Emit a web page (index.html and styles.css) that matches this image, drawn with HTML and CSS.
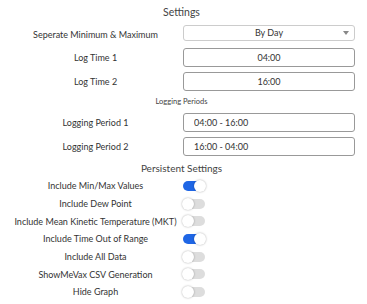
FILE: index.html
```html
<html>
<head>
  <title>Settings</title>
  <link rel="stylesheet" href="styles.css">
</head>
<body>
  <div class="settings">
    <div class="section-title">Settings</div>
    <div class="form-grid">
      <label class="form-label">Seperate Minimum &amp; Maximum</label>
      <div class="select-box">
        <span>By Day</span>
        <svg class="caret" width="6" height="4" viewBox="0 0 6 4"><path d="M0 0 L6 0 L3 4 Z" fill="#888"/></svg>
      </div>
      <label class="form-label">Log Time 1</label>
      <input class="text-input centered" type="text" value="04:00">
      <label class="form-label">Log Time 2</label>
      <input class="text-input centered" type="text" value="16:00">
    </div>

    <div class="sub-title">Logging Periods</div>
    <div class="form-grid periods">
      <label class="form-label">Logging Period 1</label>
      <input class="text-input" type="text" value="04:00 - 16:00">
      <label class="form-label">Logging Period 2</label>
      <input class="text-input" type="text" value="16:00 - 04:00">
    </div>

    <div class="section-title persistent">Persistent Settings</div>
    <div class="toggle-grid">
      <span class="toggle-label">Include Min/Max Values</span>
      <span class="toggle on"><span class="knob"></span></span>
      <span class="toggle-label">Include Dew Point</span>
      <span class="toggle"><span class="knob"></span></span>
      <span class="toggle-label">Include Mean Kinetic Temperature (MKT)</span>
      <span class="toggle"><span class="knob"></span></span>
      <span class="toggle-label">Include Time Out of Range</span>
      <span class="toggle on"><span class="knob"></span></span>
      <span class="toggle-label">Include All Data</span>
      <span class="toggle"><span class="knob"></span></span>
      <span class="toggle-label">ShowMeVax CSV Generation</span>
      <span class="toggle"><span class="knob"></span></span>
      <span class="toggle-label">Hide Graph</span>
      <span class="toggle"><span class="knob"></span></span>
    </div>
  </div>
</body>
</html>
```

FILE: styles.css
```css
body {
  margin: 0;
  background: #fff;
  font-family: Lato, "Open Sans", sans-serif;
  color: #333;
}
.settings {
  padding: 4px 12px 0 8px;
}
.section-title {
  text-align: center;
  font-size: 10.5px;
  color: #444;
  line-height: 16px;
}
.sub-title {
  text-align: center;
  font-size: 7.5px;
  color: #444;
  margin: 6px 0 6px;
  line-height: 10px;
}
.section-title.persistent {
  margin-top: 4px;
  font-size: 10px;
}
.form-grid {
  display: grid;
  grid-template-columns: 175px 172px;
  row-gap: 5px;
  align-items: center;
  margin-top: 5px;
}
.form-grid.periods {
  margin-top: 0;
}
.form-label {
  text-align: center;
  font-size: 9px;
  color: #333;
}
.select-box {
  position: relative;
  height: 16px;
  border: 1px solid #ccc;
  border-radius: 3px;
  box-sizing: border-box;
  font-size: 9px;
  line-height: 14px;
  text-align: center;
  color: #333;
  margin-bottom: 2px;
}
.caret {
  position: absolute;
  right: 5px;
  top: 5px;
}
.text-input {
  height: 19px;
  box-sizing: border-box;
  border: 1px solid #999;
  border-radius: 3px;
  font-family: Lato, "Open Sans", sans-serif;
  font-size: 9px;
  color: #333;
  padding: 0 10px;
  width: 100%;
  margin: 0;
  outline: none;
}
.text-input.centered {
  text-align: center;
}
.toggle-grid {
  display: grid;
  grid-template-columns: 175px auto;
  grid-auto-rows: 17.7px;
  align-items: center;
  margin-top: 1px;
}
.toggle-label {
  text-align: center;
  font-size: 9px;
  color: #333;
}
.toggle {
  position: relative;
  display: block;
  width: 22px;
  height: 10px;
  border-radius: 5px;
  background: #ddd;
}
.toggle.on {
  background: #1f66e5;
}
.knob {
  position: absolute;
  top: -1px;
  left: -1px;
  width: 12px;
  height: 12px;
  border-radius: 50%;
  background: #fff;
  box-shadow: 0 0 2px rgba(0, 0, 0, 0.35);
}
.toggle.on .knob {
  left: 11px;
}
```
